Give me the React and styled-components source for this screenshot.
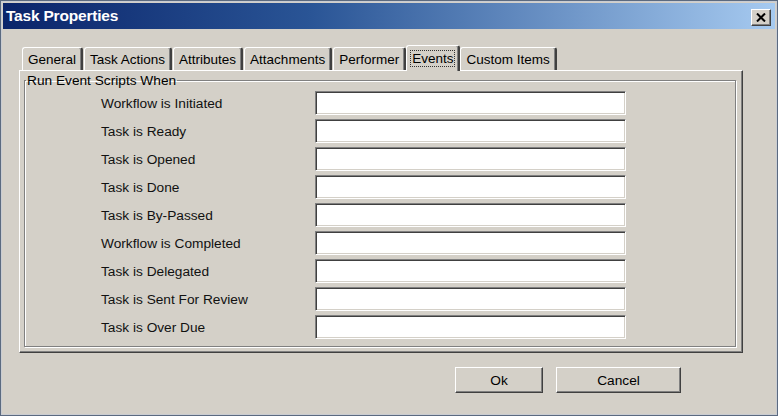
import React from "react";
import styled, { createGlobalStyle } from "styled-components";

const GlobalStyle = createGlobalStyle`
  body {
    margin: 0;
    background: #ffffff;
    font-family: "Liberation Sans", Arial, sans-serif;
  }
`;

const Window = styled.div`
  width: 778px;
  height: 416px;
  box-sizing: border-box;
  border: 1px solid #5b6a80;
  box-shadow: inset 0 0 0 1px #c9ccd2;
  background: #d4d0c8;
  padding: 2px;
  display: flex;
  flex-direction: column;
`;

const TitleBar = styled.div`
  height: 26px;
  flex-shrink: 0;
  background: linear-gradient(90deg, #0a246a 0%, #2a5596 40%, #a6caf0 100%);
  display: flex;
  align-items: center;
  justify-content: space-between;
  padding: 0 4px 0 3px;
`;

const Title = styled.span`
  color: #ffffff;
  font-weight: bold;
  font-size: 15.5px;
  letter-spacing: -0.2px;
`;

const CloseButton = styled.div`
  width: 20px;
  height: 17px;
  box-sizing: border-box;
  background: #d4d0c8;
  border: 1px solid;
  border-color: #ffffff #404040 #404040 #ffffff;
  box-shadow: inset -1px -1px 0 #808080;
  display: flex;
  align-items: center;
  justify-content: center;
  margin-top: 2px;
`;

const Body = styled.div`
  flex: 1;
  display: flex;
  flex-direction: column;
  padding: 15px 32px 0 16px;
`;

const TabStrip = styled.div`
  display: flex;
  align-items: flex-end;
  height: 26px;
  padding-left: 3px;
  position: relative;
  z-index: 1;
`;

const Tab = styled.div`
  height: ${(p) => (p.$active ? 26 : 23)}px;
  box-sizing: border-box;
  padding: 0 3px;
  margin: ${(p) => (p.$active ? "0 0 -1px -1px" : "0 1px 0 0")};
  background: #d4d0c8;
  border-top: 1px solid #ffffff;
  border-left: 1px solid #ffffff;
  border-right: 2px solid #404040;
  border-radius: 3px 3px 0 0;
  box-shadow: inset -1px 0 0 #808080;
  display: flex;
  align-items: center;
  font-size: 13.5px;
  color: #000000;
  white-space: nowrap;
`;

const TabLabel = styled.span`
  padding: 0 1px;
  border: 1px dotted ${(p) => (p.$focus ? "#333333" : "transparent")};
`;

const Panel = styled.div`
  height: 283px;
  box-sizing: border-box;
  border-top: 1px solid #ffffff;
  border-left: 1px solid #ffffff;
  border-right: 1px solid #404040;
  border-bottom: 1px solid #404040;
  box-shadow: inset -1px -1px 0 #808080;
  padding: 2px 6px 5px 4px;
  display: flex;
`;

const Group = styled.fieldset`
  flex: 1;
  margin: 0;
  padding: 3px 0 4px 0;
  border: 1px solid #808080;
  box-shadow: inset 1px 1px 0 #ffffff, 1px 1px 0 #ffffff;
`;

const Legend = styled.legend`
  font-size: 13.7px;
  padding: 0 1px;
  margin-left: 1px;
  color: #000000;
`;

const Rows = styled.div`
  display: grid;
  grid-template-columns: 214px 311px;
  row-gap: 4px;
  padding-left: 76px;
`;

const Label = styled.span`
  font-size: 13.7px;
  color: #111111;
  align-self: center;
`;

const Field = styled.input`
  width: 311px;
  height: 24px;
  box-sizing: border-box;
  margin: 0;
  background: #ffffff;
  border: 1px solid;
  border-color: #808080 #ffffff #ffffff #808080;
  box-shadow: inset 1px 1px 0 #404040, inset -1px -1px 0 #d4d0c8;
  outline: none;
  font-family: inherit;
`;

const Footer = styled.div`
  display: flex;
  gap: 13px;
  padding: 14px 0 0 436px;
`;

const Button = styled.button`
  width: ${(p) => p.$w}px;
  height: 26px;
  margin: 0;
  background: #d4d0c8;
  border: 1px solid;
  border-color: #ffffff #404040 #404040 #ffffff;
  box-shadow: inset -1px -1px 0 #808080;
  font-family: inherit;
  font-size: 13.7px;
  color: #000000;
  padding: 0;
`;

const tabs = [
  "General",
  "Task Actions",
  "Attributes",
  "Attachments",
  "Performer",
  "Events",
  "Custom Items",
];

const events = [
  "Workflow is Initiated",
  "Task is Ready",
  "Task is Opened",
  "Task is Done",
  "Task is By-Passed",
  "Workflow is Completed",
  "Task is Delegated",
  "Task is Sent For Review",
  "Task is Over Due",
];

export default function App() {
  return (
    <>
      <GlobalStyle />
      <Window>
        <TitleBar>
          <Title>Task Properties</Title>
          <CloseButton>
            <svg width="10" height="9" viewBox="0 0 10 9">
              <path d="M1 0.5 L9 8.5 M9 0.5 L1 8.5" stroke="#000" strokeWidth="2" />
            </svg>
          </CloseButton>
        </TitleBar>
        <Body>
          <TabStrip>
            {tabs.map((t) => (
              <Tab key={t} $active={t === "Events"}>
                <TabLabel $focus={t === "Events"}>{t}</TabLabel>
              </Tab>
            ))}
          </TabStrip>
          <Panel>
            <Group>
              <Legend>Run Event Scripts When</Legend>
              <Rows>
                {events.map((e) => (
                  <React.Fragment key={e}>
                    <Label>{e}</Label>
                    <Field readOnly />
                  </React.Fragment>
                ))}
              </Rows>
            </Group>
          </Panel>
          <Footer>
            <Button $w={88}>Ok</Button>
            <Button $w={125}>Cancel</Button>
          </Footer>
        </Body>
      </Window>
    </>
  );
}
